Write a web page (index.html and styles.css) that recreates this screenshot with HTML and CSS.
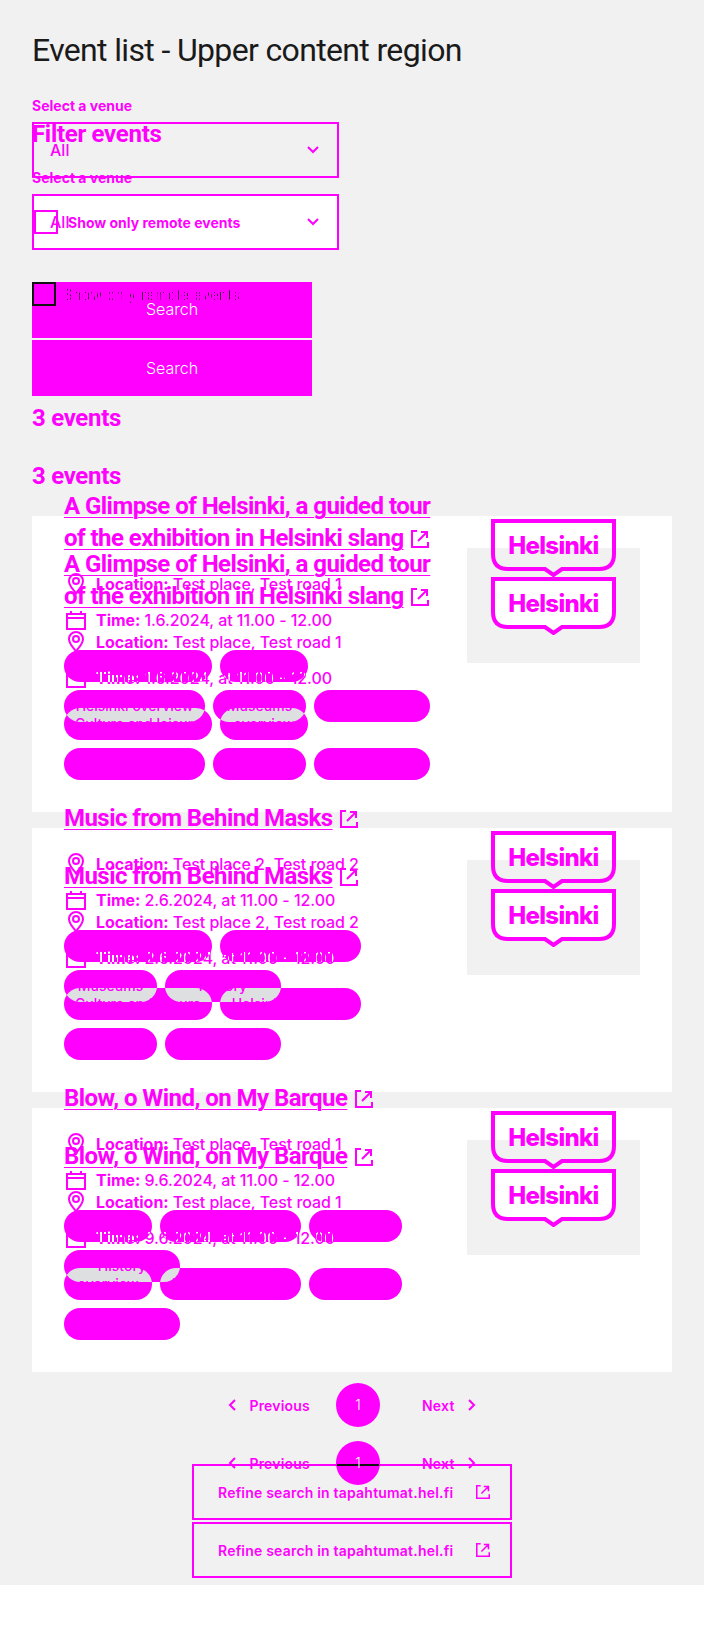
FILE: index.html
```html
<!DOCTYPE html>
<html lang="en">
<head>
    <meta charset="UTF-8">
    <meta name="viewport" content="width=device-width, initial-scale=1.0">
    <title>Event list</title>
    <link rel="stylesheet" href="styles.css">
</head>
<body>
    <svg class="defs" width="0" height="0" aria-hidden="true">
        <symbol id="ext" viewBox="0 0 18 18"><path d="M6 1H1v16h16v-5M7 11l9-9M10 2h6v6" fill="none" stroke="currentColor" stroke-width="2"/></symbol>
        <symbol id="pin" viewBox="0 0 16 22"><path d="M8 1a7 7 0 0 1 7 7c0 5-4 8-7 12.500C5 16 1 13 1 8a7 7 0 0 1 7-7z" fill="none" stroke="currentColor" stroke-width="2"/><circle cx="8" cy="8" r="3" fill="none" stroke="currentColor" stroke-width="2"/></symbol>
        <symbol id="cal" viewBox="0 0 20 20"><path d="M1 4h18v15H1zM1 8h18M5 1v3M15 1v3" fill="none" stroke="currentColor" stroke-width="2"/></symbol>
        <symbol id="down" viewBox="0 0 12 8"><path d="M1 1l5 5 5-5" fill="none" stroke="currentColor" stroke-width="2"/></symbol>
        <symbol id="left" viewBox="0 0 8 12"><path d="M7 1L2 6l5 5" fill="none" stroke="currentColor" stroke-width="2"/></symbol>
        <symbol id="right" viewBox="0 0 8 12"><path d="M1 1l5 5-5 5" fill="none" stroke="currentColor" stroke-width="2"/></symbol>
        <symbol id="shield" viewBox="0 0 125 58"><path d="M2 2h121v33q0 15-15 15H71l-8.500 6-8.500-6H17Q2 50 2 35z" stroke="currentColor" stroke-width="4"/></symbol>
    </svg>

    <main class="page">
        <h1>Event list - Upper content region</h1>

        <div class="stack">
            <!-- base layer -->
            <div class="layer layer-base">
                <h2 class="filter-title">Filter events</h2>
                <label class="field-label">Select a venue</label>
                <div class="select">All <svg class="chevron"><use href="#down"/></svg></div>
                <div class="check-row">
                    <span class="checkbox"></span>
                    <span class="check-text">Show only remote events</span>
                </div>
                <div class="search-btn">Search</div>
                <h2 class="result-count">3 events</h2>

                <article class="card">
                    <div class="card-text">
                        <h3 class="card-title"><a href="#">A Glimpse of Helsinki, a guided tour of the exhibition in Helsinki slang</a> <svg class="ext"><use href="#ext"/></svg></h3>
                        <p class="meta"><svg class="pin"><use href="#pin"/></svg><span><b>Location:</b> Test place, Test road 1</span></p>
                        <p class="meta"><svg class="cal"><use href="#cal"/></svg><span><b>Time:</b> 1.6.2024, at 11.00 - 12.00</span></p>
                        <div class="tags">
                            <span class="tag w-culture">Culture and leisure</span>
                            <span class="tag w-overview">overview</span>
                            <span class="tag w-helsinki">Helsinki overview</span>
                            <span class="tag w-museums">Museums</span>
                            <span class="tag w-history">History</span>
                        </div>
                    </div>
                    <div class="card-image">
                        <div class="logo"><svg class="logo-shape"><use href="#shield"/></svg><span class="logo-word">Helsinki</span></div>
                    </div>
                </article>

                <article class="card">
                    <div class="card-text">
                        <h3 class="card-title"><a href="#">Music from Behind Masks</a> <svg class="ext"><use href="#ext"/></svg></h3>
                        <p class="meta"><svg class="pin"><use href="#pin"/></svg><span><b>Location:</b> Test place 2, Test road 2</span></p>
                        <p class="meta"><svg class="cal"><use href="#cal"/></svg><span><b>Time:</b> 2.6.2024, at 11.00 - 12.00</span></p>
                        <div class="tags">
                            <span class="tag w-culture">Culture and leisure</span>
                            <span class="tag w-helsinki">Helsinki overview</span>
                            <span class="tag w-museums">Museums</span>
                            <span class="tag w-history">History</span>
                        </div>
                    </div>
                    <div class="card-image">
                        <div class="logo"><svg class="logo-shape"><use href="#shield"/></svg><span class="logo-word">Helsinki</span></div>
                    </div>
                </article>

                <article class="card">
                    <div class="card-text">
                        <h3 class="card-title"><a href="#">Blow, o Wind, on My Barque</a> <svg class="ext"><use href="#ext"/></svg></h3>
                        <p class="meta"><svg class="pin"><use href="#pin"/></svg><span><b>Location:</b> Test place, Test road 1</span></p>
                        <p class="meta"><svg class="cal"><use href="#cal"/></svg><span><b>Time:</b> 9.6.2024, at 11.00 - 12.00</span></p>
                        <div class="tags">
                            <span class="tag w-overview">overview</span>
                            <span class="tag w-helsinki">Helsinki overview</span>
                            <span class="tag w-museums">Museums</span>
                            <span class="tag w-history">History</span>
                        </div>
                    </div>
                    <div class="card-image">
                        <div class="logo"><svg class="logo-shape"><use href="#shield"/></svg><span class="logo-word">Helsinki</span></div>
                    </div>
                </article>

                <nav class="pager">
                    <span class="pager-prev"><svg class="arrow"><use href="#left"/></svg>Previous</span>
                    <span class="pager-num">1</span>
                    <span class="pager-next">Next<svg class="arrow"><use href="#right"/></svg></span>
                </nav>
                <div class="refine"><span>Refine search in tapahtumat.hel.fi</span><svg class="ext-small"><use href="#ext"/></svg></div>
            </div>

            <!-- second copy lying over the first one -->
            <div class="layer layer-ghost">
                <label class="field-label">Select a venue</label>
                <div class="select">All <svg class="chevron"><use href="#down"/></svg></div>
                <div class="check-row">
                    <span class="checkbox"></span>
                    <span class="check-text">Show only remote events</span>
                </div>
                <div class="search-btn">Search</div>
                <h2 class="result-count">3 events</h2>

                <article class="card">
                    <div class="card-text">
                        <h3 class="card-title"><a href="#">A Glimpse of Helsinki, a guided tour of the exhibition in Helsinki slang</a> <svg class="ext"><use href="#ext"/></svg></h3>
                        <p class="meta"><svg class="pin"><use href="#pin"/></svg><span><b>Location:</b> Test place, Test road 1</span></p>
                        <p class="meta"><svg class="cal"><use href="#cal"/></svg><span><b>Time:</b> 1.6.2024, at 11.00 - 12.00</span></p>
                        <div class="tags">
                            <span class="tag w-culture"><span class="tag-label">Culture and leisure</span>
                                <span class="time-copy at-32"><b>Time:</b> 1.6.2024, at 11.00 - 12.00</span></span>
                            <span class="tag w-overview"><span class="tag-label">overview</span>
                                <span class="time-copy at-m124"><b>Time:</b> 1.6.2024, at 11.00 - 12.00</span></span>
                            <span class="tag w-helsinki"><span class="tag-label">Helsinki overview</span>
                                <span class="lap w-culture at-0">Culture and leisure</span></span>
                            <span class="tag w-museums"><span class="tag-label">Museums</span>
                                <span class="lap w-overview at-7">overview</span></span>
                            <span class="tag w-history"><span class="tag-label">History</span></span>
                        </div>
                    </div>
                    <div class="card-image">
                        <div class="logo"><svg class="logo-shape"><use href="#shield"/></svg><span class="logo-word">Helsinki</span></div>
                    </div>
                </article>

                <article class="card">
                    <div class="card-text">
                        <h3 class="card-title"><a href="#">Music from Behind Masks</a> <svg class="ext"><use href="#ext"/></svg></h3>
                        <p class="meta"><svg class="pin"><use href="#pin"/></svg><span><b>Location:</b> Test place 2, Test road 2</span></p>
                        <p class="meta"><svg class="cal"><use href="#cal"/></svg><span><b>Time:</b> 2.6.2024, at 11.00 - 12.00</span></p>
                        <div class="tags">
                            <span class="tag w-culture"><span class="tag-label">Culture and leisure</span>
                                <span class="time-copy at-32"><b>Time:</b> 2.6.2024, at 11.00 - 12.00</span></span>
                            <span class="tag w-helsinki"><span class="tag-label">Helsinki overview</span>
                                <span class="time-copy at-m124"><b>Time:</b> 2.6.2024, at 11.00 - 12.00</span></span>
                            <span class="tag w-museums"><span class="tag-label">Museums</span>
                                <span class="lap w-culture at-0">Culture and leisure</span></span>
                            <span class="tag w-history"><span class="tag-label">History</span>
                                <span class="lap w-culture at-m101">Culture and leisure</span>
                                <span class="lap w-helsinki at-55">Helsinki overview</span></span>
                        </div>
                    </div>
                    <div class="card-image">
                        <div class="logo"><svg class="logo-shape"><use href="#shield"/></svg><span class="logo-word">Helsinki</span></div>
                    </div>
                </article>

                <article class="card">
                    <div class="card-text">
                        <h3 class="card-title"><a href="#">Blow, o Wind, on My Barque</a> <svg class="ext"><use href="#ext"/></svg></h3>
                        <p class="meta"><svg class="pin"><use href="#pin"/></svg><span><b>Location:</b> Test place, Test road 1</span></p>
                        <p class="meta"><svg class="cal"><use href="#cal"/></svg><span><b>Time:</b> 9.6.2024, at 11.00 - 12.00</span></p>
                        <div class="tags">
                            <span class="tag w-overview"><span class="tag-label">overview</span>
                                <span class="time-copy at-32"><b>Time:</b> 9.6.2024, at 11.00 - 12.00</span></span>
                            <span class="tag w-helsinki"><span class="tag-label">Helsinki overview</span>
                                <span class="time-copy at-m64"><b>Time:</b> 9.6.2024, at 11.00 - 12.00</span></span>
                            <span class="tag w-museums"><span class="tag-label">Museums</span>
                                <span class="time-copy at-m213"><b>Time:</b> 9.6.2024, at 11.00 - 12.00</span></span>
                            <span class="tag w-history"><span class="tag-label">History</span>
                                <span class="lap w-overview at-0">overview</span>
                                <span class="lap w-helsinki at-96">Helsinki overview</span></span>
                        </div>
                    </div>
                    <div class="card-image">
                        <div class="logo"><svg class="logo-shape"><use href="#shield"/></svg><span class="logo-word">Helsinki</span></div>
                    </div>
                </article>

                <nav class="pager">
                    <span class="pager-prev"><svg class="arrow"><use href="#left"/></svg>Previous</span>
                    <span class="pager-num">1</span>
                    <span class="pager-next">Next<svg class="arrow"><use href="#right"/></svg></span>
                </nav>
                <div class="refine"><span>Refine search in tapahtumat.hel.fi</span><svg class="ext-small"><use href="#ext"/></svg></div>
            </div>
        </div>
    </main>
</body>
</html>
```

FILE: styles.css
```css
* {
    box-sizing: border-box;
}

body {
    margin: 0;
    background-color: #fff;
    font-family: Inter, "Liberation Sans", sans-serif;
    color: #f0f;
}

.defs {
    position: absolute;
}

.page {
    height: 1585px;
    padding: 32px 32px 0;
    background-color: #f1f1f1;
}

h1 {
    margin: 0 0 46px;
    height: 40px;
    font-family: Roboto, sans-serif;
    font-size: 32px;
    line-height: 36px;
    font-weight: 400;
    letter-spacing: -0.65px;
    color: #1a1a1a;
}

.stack {
    position: relative;
}

.layer-ghost {
    position: absolute;
    top: -20px;
    left: 0;
    right: 0;
    z-index: 1;
}

.filter-title {
    margin: 0 0 20px;
    font-family: Roboto, sans-serif;
    font-size: 24px;
    line-height: 32px;
    font-weight: 700;
    letter-spacing: -0.3px;
}

.field-label {
    display: block;
    margin-bottom: 8px;
    font-size: 14px;
    line-height: 16px;
    font-weight: 700;
}

.select {
    display: flex;
    align-items: center;
    justify-content: space-between;
    width: 307px;
    height: 56px;
    padding: 0 18px 0 16px;
    border: 2px solid #f0f;
    font-size: 16px;
    font-weight: 500;
    background-color: #fff;
}

.layer-ghost .select {
    background-color: transparent;
}

.chevron {
    width: 12px;
    height: 8px;
}

.check-row {
    display: flex;
    align-items: center;
    gap: 8px;
    height: 24px;
    margin-top: 32px;
    position: relative;
    z-index: 2;
    font-size: 14px;
    font-weight: 300;
    color: #111;
}

.checkbox {
    width: 24px;
    height: 24px;
    border: 2px solid #111;
}

.check-text {
    letter-spacing: 0.5px;
    -webkit-mask-image: repeating-linear-gradient(90deg, #000 0 1px, transparent 1px 3px);
    mask-image: repeating-linear-gradient(90deg, #000 0 1px, transparent 1px 3px);
}

.layer-ghost .check-row {
    z-index: auto;
    padding-left: 2px;
    gap: 10px;
    font-weight: 700;
    color: #f0f;
}

.layer-ghost .checkbox {
    border-color: #f0f;
}

.layer-ghost .check-text {
    letter-spacing: 0;
    -webkit-mask-image: none;
    mask-image: none;
}

.search-btn {
    display: flex;
    align-items: center;
    justify-content: center;
    width: 280px;
    height: 56px;
    margin-top: 34px;
    background-color: #f0f;
    color: #fff;
    font-size: 16px;
    font-weight: 300;
}

.layer-ghost .search-btn {
    margin-top: 48px;
    padding-bottom: 2px;
}

.result-count {
    margin: 64px 0 24px;
    font-family: Roboto, sans-serif;
    font-size: 24px;
    line-height: 32px;
    font-weight: 700;
    letter-spacing: -0.3px;
}

.card {
    display: grid;
    grid-template-columns: 371px 173px;
    column-gap: 32px;
    margin-bottom: 16px;
    padding: 32px;
    background-color: #fff;
}

.layer-ghost .card {
    background-color: transparent;
}

.card-title {
    margin: 0;
    font-family: Roboto, sans-serif;
    font-size: 24px;
    line-height: 32px;
    font-weight: 700;
    letter-spacing: -0.55px;
}

.card-title a {
    color: #f0f;
    text-decoration: underline;
    text-decoration-thickness: 1px;
    text-underline-offset: 3px;
}

.ext {
    width: 18px;
    height: 18px;
    margin-left: 2px;
    vertical-align: -2px;
}

.meta {
    display: flex;
    align-items: center;
    height: 24px;
    margin: 12px 0 0;
    font-size: 16px;
    font-weight: 500;
    letter-spacing: -0.05px;
}

.card-title + .meta {
    margin-top: 18px;
}

.meta > span {
    margin-left: 8px;
}

.pin,
.cal {
    width: 24px;
    flex: none;
}

.pin {
    height: 22px;
}

.cal {
    height: 20px;
}

.tags {
    display: flex;
    flex-wrap: wrap;
    gap: 8px;
    margin-top: 18px;
}

.tag,
.lap {
    height: 32px;
    border-radius: 16px;
    font-size: 14px;
    line-height: 32px;
    font-weight: 500;
    text-align: center;
    white-space: nowrap;
    color: #f0f;
}

.tag {
    position: relative;
    display: block;
    overflow: hidden;
    background-color: #f0f;
}

.w-culture { width: 148px; }
.w-overview { width: 88px; }
.w-helsinki { width: 141px; }
.w-museums { width: 93px; }
.w-history { width: 116px; }

/* parts where the two copies of the tags overlap */
.lap {
    position: absolute;
    top: 18px;
    background-color: #dedfe1;
}

.tag-label {
    position: relative;
    z-index: 1;
}

.time-copy {
    position: absolute;
    top: 16px;
    font-size: 16px;
    line-height: 24px;
    font-weight: 400;
    color: #fff;
    -webkit-mask-image: repeating-linear-gradient(90deg, #000 0 2px, transparent 2px 4px);
    mask-image: repeating-linear-gradient(90deg, #000 0 2px, transparent 2px 4px);
}

.at-0 { left: 0; }
.at-7 { left: 7px; }
.at-32 { left: 32px; }
.at-55 { left: 55px; }
.at-96 { left: 96px; }
.at-m64 { left: -64px; }
.at-m101 { left: -101px; }
.at-m124 { left: -124px; }
.at-m213 { left: -213px; }

.card-image {
    display: flex;
    align-items: center;
    justify-content: center;
    height: 115px;
    background-color: #f1f1f1;
}

.layer-ghost .card-image {
    background-color: transparent;
}

.logo {
    position: relative;
    display: flex;
    justify-content: center;
    width: 125px;
    height: 58px;
}

.logo-shape {
    position: absolute;
    inset: 0;
    width: 125px;
    height: 58px;
    fill: #fff;
}

.layer-ghost .logo-shape {
    fill: none;
}

.logo-word {
    position: relative;
    font-size: 24px;
    line-height: 54px;
    font-weight: 800;
    letter-spacing: -0.7px;
}

.pager {
    display: flex;
    align-items: center;
    justify-content: center;
    margin-top: 69px;
    font-size: 14px;
    font-weight: 600;
    letter-spacing: 0.2px;
}

.pager-prev,
.pager-next {
    display: flex;
    align-items: center;
}

.arrow {
    width: 8px;
    height: 12px;
}

.pager-prev .arrow {
    margin-right: 13px;
}

.pager-next .arrow {
    margin-left: 13px;
}

.pager-num {
    position: relative;
    width: 44px;
    height: 44px;
    margin: 0 42px 0 26px;
    border-radius: 50%;
    background-color: #f0f;
    color: #fff;
    line-height: 44px;
    text-align: center;
    font-weight: 300;
}

/* border of the lower button where it crosses the page number */
.layer-base .pager-num {
    z-index: 2;
}

.layer-base .pager-num::after {
    content: "";
    position: absolute;
    top: 23px;
    left: 1px;
    right: 1px;
    height: 2px;
    background-color: #111;
    z-index: -1;
}

.refine {
    display: flex;
    align-items: center;
    justify-content: space-between;
    width: 320px;
    height: 56px;
    margin: 37px auto 0;
    padding: 0 20px 0 24px;
    border: 2px solid #f0f;
    font-size: 14px;
    font-weight: 600;
    letter-spacing: 0.2px;
}

.ext-small {
    width: 14px;
    height: 14px;
}
```
